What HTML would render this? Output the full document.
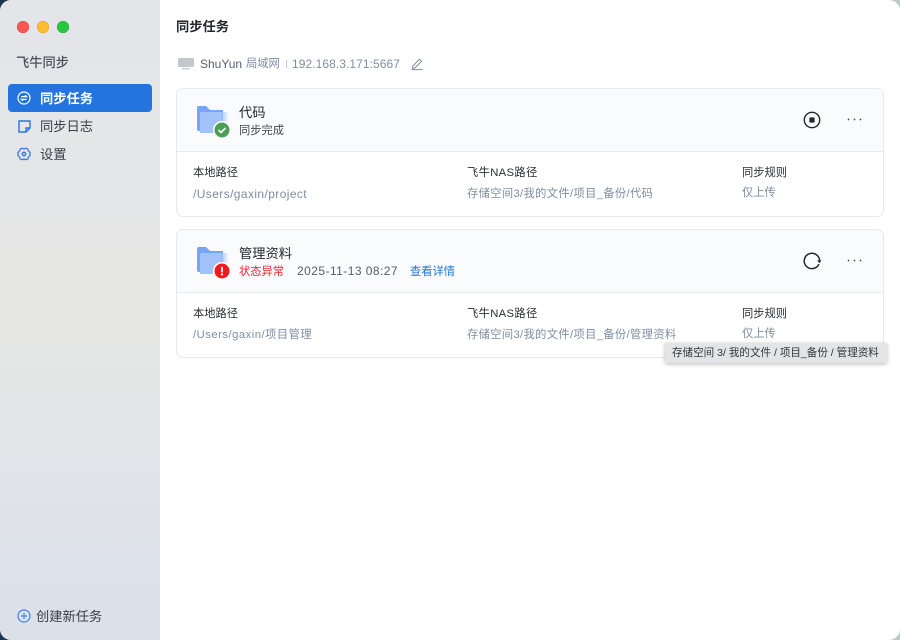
<!DOCTYPE html>
<html lang="zh-CN"><head><meta charset="utf-8"><title>飞牛同步</title>
<style>
html,body{margin:0;padding:0;width:900px;height:640px;overflow:hidden;background:#9fb4b8}
body{font-family:"Liberation Sans","Noto Sans CJK SC",sans-serif;position:relative}
#bgc{position:absolute;left:0;top:0;width:900px;height:640px;background:linear-gradient(90deg,#1d3350 0,#1d3350 50px,#b9c9c8 850px,#b9c9c8 900px)}
#win{position:absolute;left:0;top:0;width:900px;height:640px;border-radius:11px;overflow:hidden;background:#fff}
#side{position:absolute;left:0;top:0;width:160px;height:640px;background:linear-gradient(180deg,#e3e5e8 0,#e4e6e8 170px,#e7e7e4 290px,#e3e5e7 420px,#dde1e9 560px,#dce0e9 640px)}
.t{position:absolute;white-space:nowrap;line-height:16px}
.dot{position:absolute;top:21px;width:12px;height:12px;border-radius:50%}
#act{position:absolute;left:8px;top:84px;width:144px;height:28px;border-radius:4px;background:#2474e0}
.card{position:absolute;left:176px;width:706px;border:1px solid #e6e9ef;border-radius:7px;overflow:hidden;background:#fff}
.head{position:absolute;left:0;top:0;width:706px;height:62px;background:#fafbfd;border-bottom:1px solid #e6e9ef}
.lab{font-size:11.25px;color:#2a2e36}
.val{font-size:11.25px;color:#7f8da3}
svg{position:absolute;display:block;overflow:visible}
</style></head><body>
<div id="bgc"></div>
<div id="win">
<div id="side">
<div class="dot" style="left:17px;background:#fc5753;box-shadow:inset 0 0 0 .5px #df4744"></div>
<div class="dot" style="left:37px;background:#fdbc2e;box-shadow:inset 0 0 0 .5px #de9f34"></div>
<div class="dot" style="left:57px;background:#27c83f;box-shadow:inset 0 0 0 .5px #2aac2f"></div>
<div class="t" style="left:16px;top:55px;font-size:13.25px;font-weight:500;color:#4a505c">飞牛同步</div>
<div id="act"></div>
<svg style="left:17px;top:91px" width="14" height="14" viewBox="0 0 14 14" fill="none" stroke="#fff" stroke-width="1.2"><circle cx="7" cy="7" r="6"/><path d="M4.3 5.6H9.5L8 4.2M9.7 8.4H4.5L6 9.8"/></svg>
<div class="t" style="left:40px;top:91px;font-size:13.25px;font-weight:700;color:#fff">同步任务</div>
<svg style="left:18px;top:120px" width="13" height="13" viewBox="0 0 13 13" fill="none" stroke="#2a74e0" stroke-width="1.4"><path d="M1 1H12V8L8 12H1ZM12 8H8V12"/></svg>
<div class="t" style="left:40px;top:119px;font-size:13.25px;color:#3b404a">同步日志</div>
<svg style="left:17px;top:147px" width="14" height="14" viewBox="0 0 14 14" fill="none" stroke="#3a7de2" stroke-width="1.3"><path d="M5 1.2Q7 2.4 9 1.2L11 2.2Q11 4.4 13 5.3V8.7Q11 9.6 11 11.8L9 12.8Q7 11.6 5 12.8L3 11.8Q3 9.6 1 8.7V5.3Q3 4.4 3 2.2Z"/><circle cx="7" cy="7" r="1.7" stroke-width="1.5"/></svg>
<div class="t" style="left:40px;top:147px;font-size:13.25px;color:#3b404a">设置</div>
<svg style="left:17px;top:609px" width="14" height="14" viewBox="0 0 14 14" fill="none" stroke="#3d84ea" stroke-width="1.2"><circle cx="7" cy="7" r="6"/><path d="M4 7H10M7 4V10"/></svg>
<div class="t" style="left:36px;top:609px;font-size:13.25px;color:#3b404a">创建新任务</div>
</div>

<div class="t" style="left:176px;top:19px;font-size:13.25px;font-weight:700;color:#23262d">同步任务</div>
<svg style="left:178px;top:58px" width="16" height="12" viewBox="0 0 16 12"><rect x="0" y="0" width="16" height="9" rx="1.5" fill="#c4c8cc"/><rect x="4" y="10" width="8" height="1.4" fill="#c9cdd1"/></svg>
<div class="t" style="left:200px;top:56px;font-size:12px;color:#596272">ShuYun</div>
<div class="t" style="left:246px;top:56px;font-size:11.25px;color:#7f8da3">局域网</div>
<div style="position:absolute;left:286px;top:60px;width:1px;height:8px;background:#c6ccd6"></div>
<div class="t" style="left:292px;top:56px;font-size:12px;letter-spacing:.07px;color:#7f8da3">192.168.3.171:5667</div>
<svg style="left:411px;top:58px" width="12" height="13" viewBox="0 0 12 13" fill="none" stroke="#7f8da3" stroke-width="1"><path d="M1.7 8.2L8.5 1.2 10.6 3.2 3.8 10 1.4 10.4ZM.5 11.6H11.5"/></svg>

<div class="card" style="top:88px;height:127px">
<div class="head"></div>
</div>
<svg style="left:197px;top:106px" width="34" height="33" viewBox="0 0 34 33"><defs><linearGradient id="fd" x1="0" x2="1" y1="0" y2="0"><stop offset=".72" stop-color="#a3c2fb"/><stop offset="1" stop-color="#a3c2fb" stop-opacity=".15"/></linearGradient></defs><path d="M0 2Q0 0 2 0H9L13 4H26V23Q26 25 24 25H2Q0 25 0 23Z" fill="#76a5f5"/><path d="M3 8Q3 6 5 6H31V27H3Z" fill="url(#fd)"/><circle cx="25" cy="24" r="9" fill="#fff"/><circle cx="25" cy="24" r="7.5" fill="#4c9e55"/><path d="M21.5 24L24 26.5 28.5 22" fill="none" stroke="#fff" stroke-width="1.6"/></svg>
<div class="t" style="left:239px;top:105px;font-size:13.25px;color:#23262d">代码</div>
<div class="t" style="left:239px;top:123px;font-size:11.25px;color:#414751">同步完成</div>
<svg style="left:803px;top:111px" width="18" height="18" viewBox="0 0 18 18" fill="none"><circle cx="9" cy="9" r="7.7" stroke="#23262d" stroke-width="1.4"/><rect x="6.4" y="6.4" width="5.2" height="5.2" rx=".8" fill="#23262d"/></svg>
<svg style="left:847px;top:118px" width="15" height="3" viewBox="0 0 15 3" fill="#3b404a"><circle cx="1.5" cy="1.5" r=".85"/><circle cx="7.5" cy="1.5" r=".85"/><circle cx="13.5" cy="1.5" r=".85"/></svg>
<div class="t lab" style="left:193px;top:165px">本地路径</div>
<div class="t lab" style="left:467px;top:165px;letter-spacing:.35px">飞牛NAS路径</div>
<div class="t lab" style="left:742px;top:165px">同步规则</div>
<div class="t val" style="left:193px;top:186px;font-size:12px;letter-spacing:.4px">/Users/gaxin/project</div>
<div class="t val" style="left:467px;top:186px;letter-spacing:.36px">存储空间3/我的文件/项目_备份/代码</div>
<div class="t val" style="left:742px;top:185px">仅上传</div>

<div class="card" style="top:229px;height:127px">
<div class="head"></div>
</div>
<svg style="left:197px;top:247px" width="34" height="33" viewBox="0 0 34 33"><path d="M0 2Q0 0 2 0H9L13 4H26V23Q26 25 24 25H2Q0 25 0 23Z" fill="#76a5f5"/><path d="M3 8Q3 6 5 6H31V27H3Z" fill="url(#fd)"/><circle cx="25" cy="24" r="9" fill="#fff"/><circle cx="25" cy="24" r="7.5" fill="#f5191e"/><rect x="24.1" y="19.8" width="1.8" height="5.6" rx=".6" fill="#fff"/><circle cx="25" cy="27.4" r="1.1" fill="#fff"/></svg>
<div class="t" style="left:239px;top:246px;font-size:13.25px;color:#23262d">管理资料</div>
<div class="t" style="left:239px;top:264px;font-size:11.25px;color:#f5222d">状态异常</div>
<div class="t" style="left:297px;top:263px;font-size:12px;letter-spacing:.45px;color:#565e6c">2025-11-13 08:27</div>
<div class="t" style="left:410px;top:264px;font-size:11.25px;color:#2474e0">查看详情</div>
<svg style="left:803px;top:252px" width="18" height="18" viewBox="0 0 18 18" fill="none"><path d="M15.9 12.2A7.7 7.7 0 1 1 16.6 8.4" stroke="#23262d" stroke-width="1.5"/><path d="M14.2 8.4H18.6L16.3 11.2Z" fill="#23262d"/></svg>
<svg style="left:847px;top:259px" width="15" height="3" viewBox="0 0 15 3" fill="#3b404a"><circle cx="1.5" cy="1.5" r=".85"/><circle cx="7.5" cy="1.5" r=".85"/><circle cx="13.5" cy="1.5" r=".85"/></svg>
<div class="t lab" style="left:193px;top:306px">本地路径</div>
<div class="t lab" style="left:467px;top:306px;letter-spacing:.35px">飞牛NAS路径</div>
<div class="t lab" style="left:742px;top:306px">同步规则</div>
<div class="t val" style="left:193px;top:327px;letter-spacing:.5px">/Users/gaxin/项目管理</div>
<div class="t val" style="left:467px;top:327px;letter-spacing:.36px">存储空间3/我的文件/项目_备份/管理资料</div>
<div class="t val" style="left:742px;top:326px">仅上传</div>

<div style="position:absolute;left:665px;top:343px;width:222px;height:20px;background:#e3e4e6;border-radius:2px;box-shadow:0 1px 4px rgba(0,0,0,.28)"></div>
<div class="t" style="left:672px;top:345px;font-size:10.55px;color:#33363c">存储空间 3/ 我的文件 / 项目_备份 / 管理资料</div>
</div>
</body></html>
